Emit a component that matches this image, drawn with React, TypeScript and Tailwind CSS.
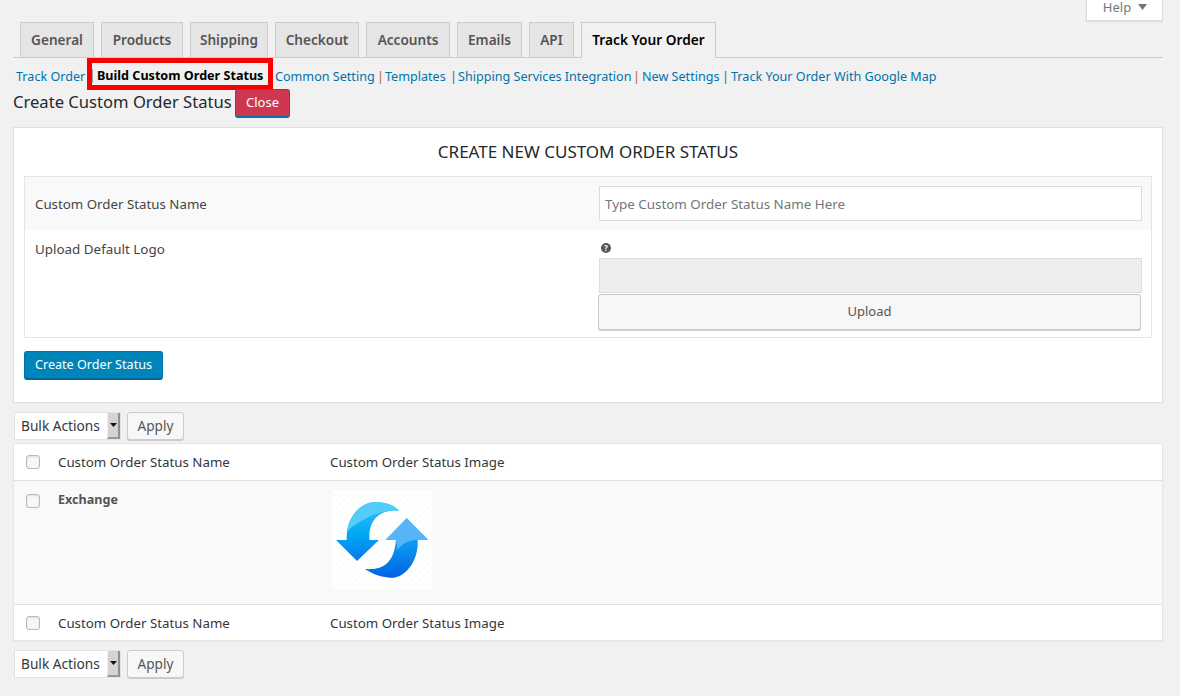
const tabs = [
  { label: "General", w: "w-[74px]" },
  { label: "Products", w: "w-[82px]" },
  { label: "Shipping", w: "w-[78px]" },
  { label: "Checkout", w: "w-[84px]" },
  { label: "Accounts", w: "w-[84px]" },
  { label: "Emails", w: "w-[65px]" },
  { label: "API", w: "w-[45px]" },
];

function SyncLogo() {
  return (
    <svg viewBox="0 0 100 100" className="h-[100px] w-[100px]">
      <defs>
        <linearGradient id="arrowA" x1="0" y1="0" x2="0" y2="1">
          <stop offset="0" stopColor="#35c4f8" />
          <stop offset="0.55" stopColor="#00a8f4" />
          <stop offset="1" stopColor="#0a78ec" />
        </linearGradient>
        <linearGradient id="arrowB" x1="0" y1="0" x2="0" y2="1">
          <stop offset="0" stopColor="#2fb4f6" />
          <stop offset="0.45" stopColor="#0a98f0" />
          <stop offset="1" stopColor="#0062e4" />
        </linearGradient>
        <pattern id="hatch" width="5" height="5" patternUnits="userSpaceOnUse" patternTransform="rotate(-45)">
          <rect width="5" height="5" fill="#ffffff" />
          <rect width="5" height="1" fill="#f9f9f9" />
        </pattern>
      </defs>
      <rect width="100" height="100" fill="url(#hatch)" />
      <path
        d="M4 50 H14.700 C14 28 28 11 45 12 C54 12.500 62 15 67 20.700 C50 19 36 28 37.500 50 H47 L25 71 Z"
        fill="url(#arrowA)"
      />
      <path
        d="M15 42 C17 24 30 12 45 12 C54 12.500 62 15 67 20.700 C52 19.500 38 26 31 30 C25 33 19 37 15 42 Z"
        fill="#52cdfa"
      />
      <path
        d="M53.700 49.700 L74.700 28.300 L96 49.700 H85.700 C87 72 72 89 58 87.700 C49 87 40 84 33 79 C48 80 62 76 64 49.700 Z"
        fill="url(#arrowB)"
      />
      <path d="M53.700 49.700 L74.700 28.300 L96 49.700 H85.700 C79 50 71 52 65.500 60 C65 56 64.500 53 64 49.700 Z" fill="#58b4f8" />
    </svg>
  );
}

function BulkBar() {
  return (
    <div className="flex items-stretch gap-[6px] h-[28px] ml-px">
      <div className="w-[107px] flex bg-white border border-[#e2e2e2] text-[13.700px] text-[#32373c]">
        <span className="flex-1 pl-[6px] leading-[26px]">Bulk Actions</span>
        <span className="w-[13px] flex items-center justify-center bg-[#d4d4d4] border-l border-[#eee] border-r-2 border-r-[#8f8f8f] border-b-2 border-b-[#999]">
          <svg width="7" height="4" viewBox="0 0 7 4"><path d="M0 0h7L3.500 4z" fill="#111" /></svg>
        </span>
      </div>
      <button className="w-[57px] rounded-[3px] bg-[#f7f7f7] border border-[#ccc] shadow-[0_1px_0_#ccc] text-[13.600px] text-[#555]">
        Apply
      </button>
    </div>
  );
}

function Checkbox() {
  return <span className="block w-[14px] h-[14px] rounded-[3px] bg-[#f7f7f7] border border-[#b4b9be] shadow-[inset_0_1px_2px_rgba(0,0,0,0.1)]" />;
}

function HeadRow({ border }: { border: string }) {
  return (
    <div className={`flex items-center text-[13.300px] text-[#32373c] ${border}`}>
      <div className="w-[44px] pl-[12px]"><Checkbox /></div>
      <div className="w-[272px] pt-[2px]">Custom Order Status Name</div>
      <div className="pt-[2px]">Custom Order Status Image</div>
    </div>
  );
}

export default function App() {
  return (
    <div className="h-[696px] overflow-hidden bg-[#f1f1f1] pl-[13px] pr-[17px] text-[#23282d] font-['Noto_Sans','Open_Sans',sans-serif]">
      {/* Help tab */}
      <div className="flex justify-end h-[22px]">
        <div className="w-[77px] h-[21px] bg-white border-x border-b border-[#ddd] shadow-[0_1px_1px_rgba(0,0,0,0.08)] flex items-start justify-center gap-[7px] pl-[1px] pt-[1px] text-[13px] leading-[13px] text-[#72777c]">
          <span>Help</span>
          <svg width="9" height="6" viewBox="0 0 9 6" className="mt-[3px]"><path d="M0 0h9L4.500 6z" fill="#72777c" /></svg>
        </div>
      </div>

      {/* Settings tabs */}
      <div className="flex gap-[7px] h-[36px] pl-[7px] border-b border-[#ccc]">
        {tabs.map((t) => (
          <div
            key={t.label}
            className={`${t.w} h-[35px] flex items-center justify-center bg-[#e5e5e5] border border-b-0 border-[#ccc] text-[13.600px] font-semibold text-[#555]`}
          >
            {t.label}
          </div>
        ))}
        <div className="w-[135px] h-[36px] pb-[1px] flex items-center justify-center bg-[#f1f1f1] border border-b-0 border-[#ccc] text-[13.700px] font-semibold text-black">
          Track Your Order
        </div>
      </div>

      {/* Sub navigation */}
      <div className="flex items-center h-[32px] text-[12.600px] text-[#0073aa] whitespace-nowrap">
        <span className="ml-[3px] w-[70px] mt-[6px]">Track Order</span>
        <span className="ml-[1px] w-[186px] h-[32px] flex items-center border-[5px] border-[#fb0000] text-[#000] font-bold text-[12.600px]">
          <span className="w-[1px] h-[14px] bg-[#9aa5ab] mt-[4px]" />
          <span className="ml-[4px] mt-[4px]">Build Custom Order Status</span>
        </span>
        <span className="ml-[2px] w-[102px] mt-[6px]">Common Setting</span>
        <span className="w-[8px] mt-[6px] text-[#b5623c]">|</span>
        <span className="w-[65px] mt-[6px]">Templates</span>
        <span className="w-[8px] mt-[6px]">|</span>
        <span className="w-[175px] mt-[6px]">Shipping Services Integration</span>
        <span className="w-[9px] mt-[6px] text-[#b5623c]">|</span>
        <span className="w-[80px] mt-[6px]">New Settings</span>
        <span className="w-[9px] mt-[6px]">|</span>
        <span className="mt-[6px]">Track Your Order With Google Map</span>
      </div>

      {/* Heading */}
      <div className="flex items-start h-[38px] -mt-[1px]">
        <h2 className="text-[16.600px] leading-[26px] text-[#23282d] w-[222px] whitespace-nowrap">Create Custom Order Status</h2>
        <button className="w-[55px] h-[29px] rounded-[3px] bg-[#cd3850] border border-[#0073aa] border-b-2 text-[13px] text-white">
          Close
        </button>
      </div>

      {/* Create form card */}
      <div className="h-[276px] bg-white border border-[#e0e0e0] px-[10px] pt-[9px]">
        <h3 className="text-center text-[17px] leading-[30px] text-[#23282d] h-[39px]">CREATE NEW CUSTOM ORDER STATUS</h3>
        <div className="h-[162px] border border-[#e5e5e5]">
          <div className="flex h-[53px] bg-[#f9f9f9] pl-[10px] pr-[9px] pt-[9px]">
            <div className="w-[564px] leading-[36px] text-[13.300px] text-[#444]">Custom Order Status Name</div>
            <div className="flex-1 h-[35px] bg-white border border-[#ddd] px-[5px] leading-[34px] text-[13.400px] text-[#72777c]">
              Type Custom Order Status Name Here
            </div>
          </div>
          <div className="flex pl-[10px] pr-[9px]">
            <div className="w-[564px] pt-[9px] leading-[20px] text-[13.400px] text-[#444]">Upload Default Logo</div>
            <div className="flex-1">
              <div className="h-[28px] flex items-center pl-[2px] pt-[8px]">
                <span className="w-[10px] h-[10px] rounded-full bg-[#555] text-white text-[8px] leading-[10px] text-center font-bold">?</span>
              </div>
              <div className="h-[35px] bg-[#eee] border border-[#ddd]" />
              <button className="block -ml-[1px] mt-[1px] w-full h-[36px] rounded-[3px] bg-[#f7f7f7] border border-[#ccc] shadow-[0_1px_0_#ccc] text-[13px] text-[#555]">
                Upload
              </button>
            </div>
          </div>
        </div>
        <button className="mt-[13px] w-[139px] h-[29px] pt-[1px] rounded-[3px] bg-[#0085ba] border border-[#0073aa] border-b-2 border-b-[#006799] text-[12.600px] text-white">
          Create Order Status
        </button>
      </div>

      <div className="mt-[9px]"><BulkBar /></div>

      {/* Status table */}
      <div className="mt-[3px] h-[198px] bg-white border border-[#e5e5e5] shadow-[0_1px_1px_rgba(0,0,0,0.04)]">
        <HeadRow border="h-[37px] border-b border-[#e1e1e1]" />
        <div className="flex h-[124px] bg-[#f9f9f9] border-b border-[#e1e1e1]">
          <div className="w-[44px] pl-[12px] pt-[13px]"><Checkbox /></div>
          <div className="w-[272px] pt-[10px] text-[12.600px] leading-[18px] font-bold text-[#555]">Exchange</div>
          <div className="ml-[2px] pt-[9px]"><SyncLogo /></div>
        </div>
        <HeadRow border="h-[35px]" />
      </div>

      <div className="mt-[9px]"><BulkBar /></div>
    </div>
  );
}
